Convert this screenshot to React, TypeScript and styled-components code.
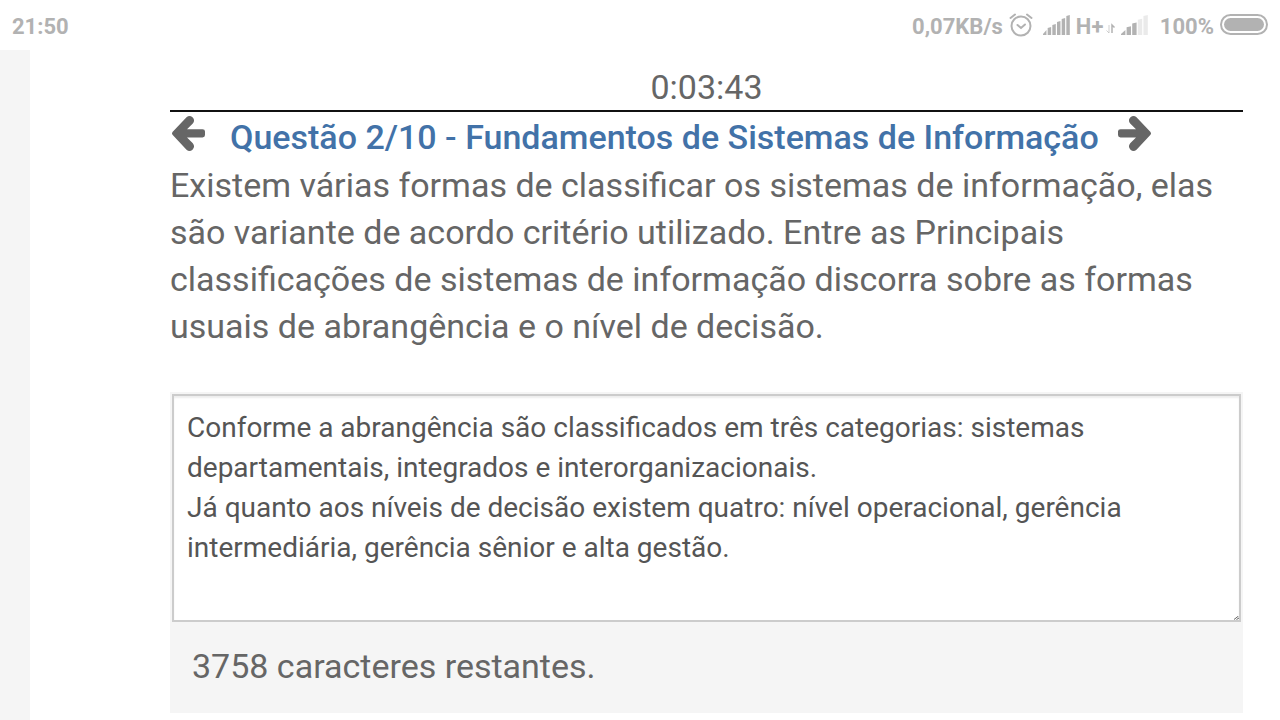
import React, { useState } from "react";
import styled, { createGlobalStyle } from "styled-components";

const GlobalStyle = createGlobalStyle`
  *, *::before, *::after { box-sizing: border-box; }
  body {
    margin: 0;
    background: #fff;
    color: #666;
    font-family: Roboto, "Liberation Sans", sans-serif;
    overflow-x: hidden;
  }
`;

const Page = styled.div`
  display: flex;
  flex-direction: column;
  min-height: 100vh;
`;

const StatusBar = styled.header`
  display: flex;
  justify-content: space-between;
  align-items: center;
  height: 50px;
  padding: 4px 12px 0;
  color: #b2b2b2;
  font-size: 22px;
  line-height: 26px;
  font-weight: 700;
`;

const StatusGroup = styled.div`
  display: flex;
  align-items: center;
`;

const StatusIcon = styled.svg<{ $before?: number; $after?: number }>`
  display: block;
  flex: none;
  margin: 0 ${(p) => p.$after ?? 0}px 4px ${(p) => p.$before ?? 0}px;
`;

const Body = styled.div`
  display: flex;
  flex: 1;
`;

const SideStrip = styled.aside`
  flex: none;
  width: 30px;
  background: #f5f5f5;
`;

const Main = styled.main`
  flex: 1;
  min-width: 0;
  padding: 16px 37px 7px 140px;
`;

const Timer = styled.div`
  height: 46px;
  border-bottom: 2px solid #111;
  font-size: 34px;
  line-height: 42px;
  text-align: center;
`;

const QuestionBar = styled.nav`
  display: flex;
  align-items: center;
  height: 50px;
`;

const NavButton = styled.button`
  flex: none;
  padding: 0 0 6px;
  border: 0;
  background: none;
  color: #666;
  cursor: pointer;

  svg { display: block; overflow: visible; }
`;

const Title = styled.h1`
  margin: 0 18px 0 24px;
  color: #4272a8;
  font-size: 34px;
  line-height: 50px;
  font-weight: 500;
  white-space: nowrap;
`;

const Prompt = styled.p`
  margin: 0 0 42px;
  font-size: 34px;
  line-height: 47px;
`;

const AnswerPanel = styled.section`
  padding: 2px;
  background: #f5f5f5;
`;

const AnswerBox = styled.div`
  position: relative;
`;

const Answer = styled.textarea`
  display: block;
  width: 100%;
  height: 228px;
  padding: 12px 13px;
  border: 2px solid #ccc;
  background: #fff;
  box-shadow: inset 0 2px 2px #eee;
  color: #555;
  font: 400 28px/40px Roboto, "Liberation Sans", sans-serif;
  outline: none;
  resize: none;
  overflow: hidden;
`;

const Grip = styled.svg`
  position: absolute;
  right: 2px;
  bottom: 2px;
`;

const Remaining = styled.div`
  padding: 22px 20px;
  font-size: 34px;
  line-height: 45px;
`;

const ARROW =
  "M1.500 18.800 Q0.400 17.400 1.500 16 L15.500 1.200 Q18.500 -1.300 21.500 1.200 Q24.500 4.200 21.800 7.500 L16 13.200 H31.500 Q34 13.200 34 15.500 V19 Q34 21.400 31.500 21.400 H16 L21.800 27.300 Q24.500 30.600 21.500 33.700 Q18.500 36.200 15.500 33.700 Z";

const Arrow = ({ flip = false }: { flip?: boolean }) => (
  <svg width="36" height="36" viewBox="-1 0 36 36" fill="currentColor" aria-hidden="true">
    <path d={ARROW} transform={flip ? "matrix(-1 0 0 1 34 0)" : undefined} />
  </svg>
);

const AlarmIcon = () => (
  <StatusIcon $before={6} $after={10} width="24" height="24" viewBox="0 0 24 24" fill="none" stroke="currentColor" strokeWidth="2" strokeLinecap="round">
    <circle cx="12" cy="13" r="9.500" />
    <path d="M8.500 12 L12 15 L16 11.500" />
    <path d="M1.500 5 L6 1.500 M18 1.500 L22.500 5" />
  </StatusIcon>
);

const SignalIcon = ({ bars, strong }: { bars: number; strong: number }) => (
  <StatusIcon $after={5} width="28" height="20" viewBox="0 0 28 20" fill="currentColor">
    {Array.from({ length: bars }, (_, i) => {
      const step = 28 / bars;
      const x = i * step;
      const top = 15 - (i * 15) / (bars - 1);
      return (
        <path
          key={i}
          d={`M${x} ${top + (i ? 1 : 4)} L${x + step - 1.2} ${top} V20 H${x} Z`}
          opacity={i < strong ? 1 : 0.28}
        />
      );
    })}
  </StatusIcon>
);

const DataIcon = () => (
  <StatusIcon $before={3} $after={6} width="9" height="8" viewBox="0 -4 9 8" fill="none" stroke="currentColor" overflow="visible">
    <path d="M3 0 V8 L0.500 5.500" opacity="0.6" />
    <path d="M6 8 V0 L8.500 2.500" strokeWidth="1.500" />
  </StatusIcon>
);

const BatteryIcon = () => (
  <StatusIcon $before={6} width="48" height="22" viewBox="0 0 48 22">
    <rect x="1" y="1" width="46" height="19" rx="9.500" fill="none" stroke="currentColor" strokeWidth="2" />
    <rect x="4" y="4" width="40" height="13" rx="6.500" fill="currentColor" />
  </StatusIcon>
);

const INITIAL_ANSWER = `Conforme a abrangência são classificados em três categorias: sistemas departamentais, integrados e interorganizacionais.
Já quanto aos níveis de decisão existem quatro: nível operacional, gerência intermediária, gerência sênior e alta gestão.`;

export default function App() {
  const [answer, setAnswer] = useState(INITIAL_ANSWER);
  const remaining = 3758 + INITIAL_ANSWER.length - answer.length;

  return (
    <Page>
      <GlobalStyle />
      <StatusBar>
        <span>21:50</span>
        <StatusGroup>
          <span>0,07KB/s</span>
          <AlarmIcon />
          <SignalIcon bars={6} strong={6} />
          <span>H+</span>
          <DataIcon />
          <SignalIcon bars={5} strong={3} />
          <span>&nbsp;100%</span>
          <BatteryIcon />
        </StatusGroup>
      </StatusBar>
      <Body>
        <SideStrip />
        <Main>
          <Timer role="timer">0:03:43</Timer>
          <QuestionBar>
            <NavButton type="button" aria-label="Questão anterior">
              <Arrow />
            </NavButton>
            <Title>Questão 2/10 - Fundamentos de Sistemas de Informação</Title>
            <NavButton type="button" aria-label="Próxima questão">
              <Arrow flip />
            </NavButton>
          </QuestionBar>
          <Prompt id="prompt">
            Existem várias formas de classificar os sistemas de informação, elas são variante de
            acordo critério utilizado. Entre as Principais classificações de sistemas de informação
            discorra sobre as formas usuais de abrangência e o nível de decisão.
          </Prompt>
          <AnswerPanel>
            <AnswerBox>
              <Answer
                aria-labelledby="prompt"
                spellCheck={false}
                value={answer}
                onChange={(e) => setAnswer(e.target.value)}
              />
              <Grip width="5" height="4" viewBox="0 0 5 4" stroke="#666" aria-hidden="true">
                <path d="M0 3.500 L4.500 0 M2.500 3.500 L5 2" />
              </Grip>
            </AnswerBox>
            <Remaining>{remaining} caracteres restantes.</Remaining>
          </AnswerPanel>
        </Main>
      </Body>
    </Page>
  );
}
